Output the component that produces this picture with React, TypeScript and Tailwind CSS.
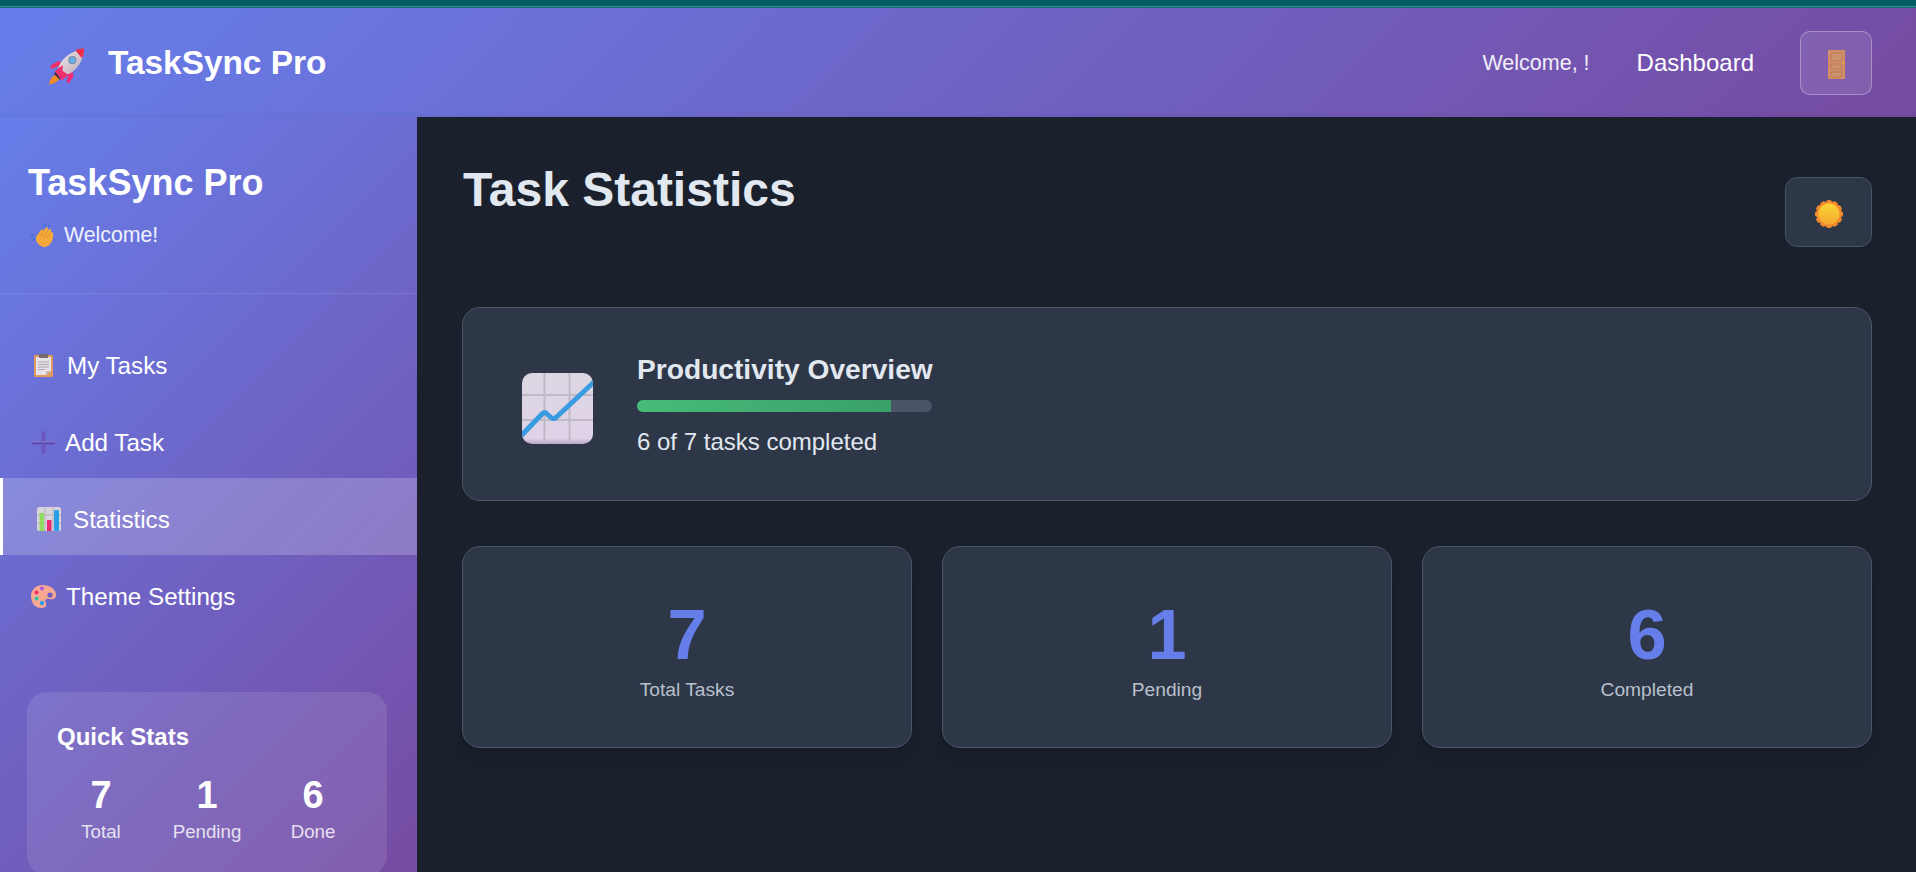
const FONT = "font-['Liberation_Sans',Arial,sans-serif]";

function RocketIcon() {
  return (
    <svg width="37" height="37" viewBox="0 0 38 37" className="mt-[8px] ml-[1px] shrink-0">
      <defs>
        <linearGradient id="rocketBody" x1="0" y1="0" x2="1" y2="1">
          <stop offset="0" stopColor="#f1e8ec" />
          <stop offset="1" stopColor="#b9a9b8" />
        </linearGradient>
      </defs>
      <path d="M12 17 L3 21 L1 18 L9 13 L15 14 Z" fill="#ee2f66" />
      <path d="M20 25 L18 34 L20 36 L25 29 L24 22 Z" fill="#f02a74" />
      <path d="M7 27 C3 28 1 32 0 37 C5 36 9 34 11 31 Z" fill="#f58a26" />
      <path d="M8 23 L14 29 L11 32 L5 26 Z" fill="#3a2f4a" />
      <path d="M9 22 C11 12 20 4 33 1 L36 4 C33 17 25 26 15 28 Z" fill="url(#rocketBody)" />
      <path d="M6 23 L14 17 L14 23 L20 27 L13 33 Z" fill="#f0316f" />
      <path d="M27 2 C30 0 34 0 36 0 C36 3 36 6 34 10 Z" fill="#ef2f4a" />
      <circle cx="24" cy="12" r="4.2" fill="#7d8fa8" />
      <circle cx="24" cy="12" r="2.8" fill="#62b4ee" />
    </svg>
  );
}

function WaveIcon() {
  return (
    <svg width="24" height="23" viewBox="0 0 24 23" className="shrink-0">
      <path d="M0.5 13 L4 10.5 M2 16.5 L5.5 14 M13 2 L16 0.3 M18 3 L20.5 1" stroke="#3f6fd0" strokeWidth="1.4" fill="none" />
      <path
        d="M6 13 L11 6 C12 4.5 14 5.5 13.5 7 L15.5 4 C16.5 2.5 18.5 3.5 18 5.5 L17.2 7.5 L19 5.5 C20.5 4.2 22 5.6 21 7.2 L20.5 8.5 C22.5 7.5 24 9 23 11 C23.5 16 20.5 22 15.5 23 C10.5 23.5 5 18.5 6 13 Z"
        fill="#f4a93a"
      />
      <path d="M13.5 7 L10.5 12.5 M17.2 7.5 L13.5 13.5 M20.5 8.5 L16.5 14.5" stroke="#d88a20" strokeWidth="0.8" fill="none" />
    </svg>
  );
}

function ClipboardIcon() {
  return (
    <svg width="19" height="23" viewBox="0 0 19 23" className="shrink-0">
      <rect x="0" y="1" width="19" height="22" rx="1" fill="#df9a5f" />
      <path d="M2 3 H17 V17 L12 21 H2 Z" fill="#e7e2e8" />
      <path d="M12 21 L17 17 H12 Z" fill="#c9b8b8" />
      <rect x="5" y="0" width="9" height="4" rx="1" fill="#75696e" />
      <path d="M4 8 H15 M4 10.5 H15 M4 13 H15 M4 15.5 H11" stroke="#a39ea8" strokeWidth="0.9" />
    </svg>
  );
}

function PlusIcon() {
  return (
    <svg width="23" height="23" viewBox="0 0 23 23" className="shrink-0">
      <rect x="0" y="10" width="23" height="3.4" rx="1.7" fill="#5f4bb6" />
      <rect x="9.6" y="0" width="3.8" height="23" rx="1.9" fill="#6d56bd" />
      <rect x="0" y="10" width="23" height="1.2" rx="0.6" fill="#8679c4" />
    </svg>
  );
}

function BarsIcon() {
  return (
    <svg width="24" height="24" viewBox="0 0 24 24" className="shrink-0">
      <rect width="24" height="24" rx="2.5" fill="#d8d4dc" />
      <path d="M8 0 V24 M16 0 V24 M0 8 H24 M0 16 H24" stroke="#b4b0b8" strokeWidth="0.9" />
      <rect x="2.5" y="6" width="4.5" height="18" rx="1" fill="#8fdc60" />
      <rect x="10" y="13" width="4.5" height="11" fill="#ea2c6f" />
      <rect x="17" y="3" width="5" height="21" rx="1" fill="#2b9fe4" />
    </svg>
  );
}

function PaletteIcon() {
  return (
    <svg width="25" height="23" viewBox="0 0 25 23" className="shrink-0">
      <path
        d="M11 0 C19 0 25 4 25 10 C25 14 21 15 18 14 C15 13 13 15 15 18 C16 21 14 23 10 23 C4 23 0 18 0 11 C0 5 5 0 11 0 Z"
        fill="#f7a893"
      />
      <circle cx="11" cy="3.5" r="2" fill="#a855e8" />
      <circle cx="5.5" cy="7.5" r="2" fill="#ef2f6e" />
      <circle cx="5.5" cy="13.5" r="2" fill="#2cc4a8" />
      <circle cx="11" cy="18" r="2.2" fill="#2c9fe8" />
      <circle cx="19" cy="10" r="2.6" fill="#6a5fc8" />
    </svg>
  );
}

function DoorIcon() {
  return (
    <svg width="17" height="29" viewBox="0 0 17 29">
      <rect width="17" height="29" rx="1" fill="#d98b55" />
      <rect x="1" y="1" width="15" height="27" fill="#cc9270" />
      <path d="M3 3 H14 V11 H3 Z M3 14 H14 V19 H3 Z M3 22 H14 V27 H3 Z" fill="#cc9270" stroke="#c0744a" strokeWidth="0.8" />
      <circle cx="15" cy="13" r="1" fill="#f0a030" />
    </svg>
  );
}

function SunIcon() {
  const rays = [0, 30, 60, 90, 120, 150, 180, 210, 240, 270, 300, 330];
  return (
    <svg width="28" height="28" viewBox="0 0 28 28">
      <defs>
        <linearGradient id="sunCore" x1="0" y1="0" x2="0" y2="1">
          <stop offset="0" stopColor="#fcd535" />
          <stop offset="1" stopColor="#f4a830" />
        </linearGradient>
      </defs>
      {rays.map((deg) => (
        <rect key={deg} x="11" y="0" width="6" height="6" rx="2.5" fill="#f58b2c" transform={`rotate(${deg} 14 14)`} />
      ))}
      <circle cx="14" cy="14" r="12.2" fill="#f58b2c" />
      <circle cx="14" cy="14" r="10.6" fill="url(#sunCore)" />
    </svg>
  );
}

function ChartIcon() {
  return (
    <svg width="71" height="71" viewBox="0 0 71 71" className="mt-[8px] shrink-0">
      <defs>
        <linearGradient id="chartBg" x1="0" y1="0" x2="0" y2="1">
          <stop offset="0" stopColor="#dcd6e2" />
          <stop offset="0.92" stopColor="#dfd3e8" />
          <stop offset="1" stopColor="#b9a6cc" />
        </linearGradient>
        <clipPath id="chartClip">
          <rect width="71" height="71" rx="10" />
        </clipPath>
      </defs>
      <g clipPath="url(#chartClip)">
        <rect width="71" height="71" fill="url(#chartBg)" />
        <path d="M22.5 0 V71 M47.5 0 V71 M0 22 H71 M0 47 H71" stroke="#c0b9c6" strokeWidth="2" />
        <path
          d="M-1 63 L20 41 Q22 38.5 24.5 40.5 L29 44.5 Q31.5 46.5 34 44.5 L72 9"
          stroke="#3a9ce0"
          strokeWidth="5"
          strokeLinejoin="round"
          fill="none"
        />
      </g>
    </svg>
  );
}

function NavItem({
  icon,
  label,
  gap,
  active = false,
}: {
  icon: React.ReactNode;
  label: string;
  gap: string;
  active?: boolean;
}) {
  return (
    <div
      className={`flex h-[77px] items-center pt-[5px] text-[24.2px] text-white ${
        active ? "border-l-[3px] border-white bg-white/20 pl-[34px]" : "pl-[32px]"
      } ${gap}`}
    >
      {icon}
      <span className="pt-[2px]">{label}</span>
    </div>
  );
}

function QuickStat({ value, label }: { value: number; label: string }) {
  return (
    <div className="text-center">
      <div className="text-[38px] leading-[40px] font-bold text-white">{value}</div>
      <div className="mt-[5px] text-[18.7px] leading-[24px] text-white/80">{label}</div>
    </div>
  );
}

function StatCard({ value, label }: { value: number; label: string }) {
  return (
    <div className="flex h-[202px] flex-col items-center rounded-[18px] border border-[#4a5568] bg-[#2d3748] pt-[48px] shadow-lg shadow-black/10">
      <div className="text-[70.4px] leading-[80px] font-bold text-[#667eea]">{value}</div>
      <div className="mt-[2px] text-[19.2px] leading-[26px] text-[#b8c0cc]">{label}</div>
    </div>
  );
}

export default function App() {
  return (
    <div className={`flex h-[872px] w-[1916px] flex-col overflow-hidden bg-[#1a202c] ${FONT}`}>
      <div className="h-[6px] shrink-0 bg-[#035f65]" />
      <div className="h-[1px] shrink-0 bg-[#35908f]" />
      <div className="h-[1px] shrink-0 bg-[#0c6a70]" />
      <header className="flex h-[109px] shrink-0 items-center justify-between bg-[linear-gradient(135deg,#667eea,#764ba2)] pr-[44px] pl-[48px] shadow-[inset_0_-5px_6px_-4px_rgba(0,0,0,0.06)]">
        <div className="flex items-center gap-[22px]">
          <RocketIcon />
          <span className="pt-[2px] text-[33.4px] font-bold text-white">TaskSync Pro</span>
        </div>
        <div className="flex items-center">
          <span className="pt-[2px] text-[21.5px] text-white/90">Welcome, !</span>
          <span className="ml-[47px] text-[24px] text-white">Dashboard</span>
          <div className="ml-[46px] flex h-[64px] w-[72px] items-center justify-center rounded-[10px] border border-white/30 bg-white/10 pt-[4px]">
            <DoorIcon />
          </div>
        </div>
      </header>
      <div className="flex min-h-0 flex-1">
        <aside className="flex w-[417px] shrink-0 flex-col bg-[linear-gradient(135deg,#667eea,#764ba2)]">
          <div className="h-[177px] shrink-0 border-b border-white/10 pt-[43px] pl-[28px]">
            <div className="text-[36px] leading-[45px] font-bold text-white">TaskSync Pro</div>
            <div className="mt-[17px] flex items-center gap-[10px] pl-[2px] text-[21.3px] leading-[26px] text-white/90">
              <WaveIcon />
              <span>Welcome!</span>
            </div>
          </div>
          <nav className="shrink-0 pt-[30px]">
            <NavItem icon={<ClipboardIcon />} label="My Tasks" gap="gap-[14px] !pl-[34px]" />
            <NavItem icon={<PlusIcon />} label="Add Task" gap="gap-[10px]" />
            <NavItem icon={<BarsIcon />} label="Statistics" gap="gap-[12px]" active />
            <NavItem icon={<PaletteIcon />} label="Theme Settings" gap="gap-[10px] !pl-[31px]" />
          </nav>
          <div className="mt-[60px] mr-[30px] ml-[27px] h-[183px] shrink-0 rounded-[20px] bg-white/10 px-[30px] pt-[32px]">
            <div className="text-[24px] leading-[26px] font-bold text-white">Quick Stats</div>
            <div className="-mx-[9px] mt-[25px] grid grid-cols-3">
              <QuickStat value={7} label="Total" />
              <QuickStat value={1} label="Pending" />
              <QuickStat value={6} label="Done" />
            </div>
          </div>
        </aside>
        <main className="min-w-0 flex-1 pt-[46px] pr-[44px] pl-[45px]">
          <div className="flex h-[84px] items-start justify-between">
            <h1 className="-mt-[1px] ml-[1px] text-[48px] leading-[55px] font-bold text-[#e2e8f0]">Task Statistics</h1>
            <div className="mt-[14px] flex h-[70px] w-[87px] items-center justify-center rounded-[12px] border border-[#4a5568] bg-[#2d3748] pt-[3px]">
              <SunIcon />
            </div>
          </div>
          <section className="mt-[60px] flex h-[194px] items-center gap-[44px] rounded-[18px] border border-[#4a5568] bg-[#2d3748] pl-[59px]">
            <ChartIcon />
            <div className="mt-[2px] w-[295px]">
              <div className="text-[28.16px] leading-[32px] font-bold whitespace-nowrap text-[#e2e8f0]">
                Productivity Overview
              </div>
              <div className="mt-[14px] h-[12px] overflow-hidden rounded-full bg-[#4a5568]">
                <div className="h-full w-[86%] bg-gradient-to-r from-[#48bb78] to-[#38a169]" />
              </div>
              <div className="mt-[15px] text-[24px] leading-[30px] whitespace-nowrap text-[#e2e8f0]">6 of 7 tasks completed</div>
            </div>
          </section>
          <div className="mt-[45px] grid grid-cols-3 gap-[30px]">
            <StatCard value={7} label="Total Tasks" />
            <StatCard value={1} label="Pending" />
            <StatCard value={6} label="Completed" />
          </div>
        </main>
      </div>
    </div>
  );
}
